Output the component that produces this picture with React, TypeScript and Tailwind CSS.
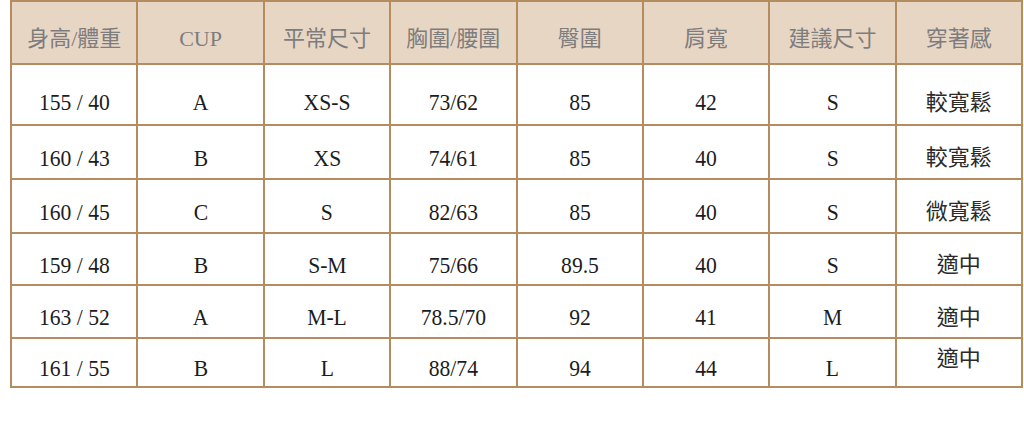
const headers = ["身高/體重", "CUP", "平常尺寸", "胸圍/腰圍", "臀圍", "肩寬", "建議尺寸", "穿著感"];

const rows: { h: string; cells: string[] }[] = [
  { h: "h-[61px]", cells: ["155 / 40", "A", "XS-S", "73/62", "85", "42", "S", "較寬鬆"] },
  { h: "h-[54px]", cells: ["160 / 43", "B", "XS", "74/61", "85", "40", "S", "較寬鬆"] },
  { h: "h-[54px]", cells: ["160 / 45", "C", "S", "82/63", "85", "40", "S", "微寬鬆"] },
  { h: "h-[52px]", cells: ["159 / 48", "B", "S-M", "75/66", "89.5", "40", "S", "適中"] },
  { h: "h-[53px]", cells: ["163 / 52", "A", "M-L", "78.5/70", "92", "41", "M", "適中"] },
  { h: "h-[49px]", cells: ["161 / 55", "B", "L", "88/74", "94", "44", "L", "適中"] },
];

export default function App() {
  return (
    <div className="w-[1024px] h-[426px] bg-white pl-[10px] font-['Liberation_Serif','Noto_Sans_CJK_TC',serif]">
      <table className="w-[1013px] table-fixed border-collapse text-[22px] leading-[1.15]">
        <thead>
          <tr className="h-[63px] bg-[#e8d6c5]">
            {headers.map((t) => (
              <th key={t} className="border-2 border-[#b58b60] pt-3 align-middle text-center font-normal text-[#7d7d7d]">
                {t}
              </th>
            ))}
          </tr>
        </thead>
        <tbody>
          {rows.map((r, i) => (
            <tr key={i} className={r.h}>
              {r.cells.map((c, j) => (
                <td
                  key={j}
                  className={`border-2 border-[#b58b60] align-middle text-center text-[#1c1c1c] ${
                    i === 5 && j === 7 ? "pb-2" : i === 0 ? "pt-4" : "pt-3"
                  }`}
                >
                  {j === 7 ? (
                    <span className="text-[#2a2a2a]">{c}</span>
                  ) : (
                    <span className="inline-block scale-x-90 text-[24px] leading-[1.1]">{c}</span>
                  )}
                </td>
              ))}
            </tr>
          ))}
        </tbody>
      </table>
    </div>
  );
}
